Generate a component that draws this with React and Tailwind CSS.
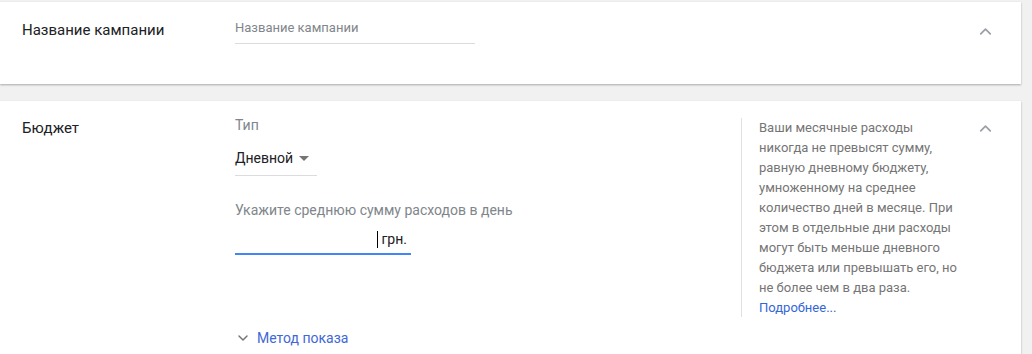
import { ChevronUp, ChevronDown } from "lucide-react";

const helpText =
  "Ваши месячные расходы никогда не превысят сумму, равную дневному бюджету, умноженному на среднее количество дней в месяце. При этом в отдельные дни расходы могут быть меньше дневного бюджета или превышать его, но не более чем в два раза.";

function Collapse() {
  return (
    <button className="ml-auto mr-[24px] mt-[-1px] h-6 w-6 flex items-center justify-center text-[#9aa0a6]">
      <ChevronUp size={19} strokeWidth={2.2} />
    </button>
  );
}

export default function App() {
  return (
    <div
      className="min-h-[354px] bg-[#f1f1f1] pt-[2px] pr-[11px] overflow-hidden"
      style={{ fontFamily: "Roboto, 'Noto Sans', sans-serif" }}
    >
      {/* Campaign name */}
      <section className="flex h-[82px] bg-white pl-[22px] pt-[18px] shadow-[0_1px_2px_rgba(0,0,0,0.3)]">
        <div className="w-[213px] text-[15px] leading-5 text-[#202124]">Название кампании</div>
        <div className="w-[240px]">
          <div className="text-[13px] leading-4 text-[#80868b]">Название кампании</div>
          <div className="mt-[7px] h-px bg-[#dadce0]" />
        </div>
        <Collapse />
      </section>

      {/* Budget */}
      <section className="mt-[17px] flex bg-white pl-[22px] pt-[16px] pb-8 shadow-[0_1px_2px_rgba(0,0,0,0.3)]">
        <div className="w-[213px] pt-[1px] text-[15px] leading-5 text-[#202124]">Бюджет</div>

        <div className="w-[506px]">
          <div className="text-[14px] leading-4 text-[#80868b]">Тип</div>
          <div className="mt-[15px] flex w-[82px] items-center text-[14px] leading-5 text-[#202124]">
            Дневной
            <svg width="10" height="5" viewBox="0 0 10 5" className="ml-[6px] mt-[1px]">
              <path d="M0 0h10L5 5z" fill="#757575" />
            </svg>
          </div>
          <div className="mt-[7px] h-px w-[82px] bg-[#dadce0]" />

          <div className="mt-[26px] text-[14px] leading-4 text-[#80868b]">
            Укажите среднюю сумму расходов в день
          </div>
          <div className="mt-[11px] flex h-[20px] w-[176px] items-center justify-end pr-[4px] text-[14px] text-[#202124]">
            <span className="mr-[3px] h-[17px] w-px bg-black" />
            грн.
          </div>
          <div className="mt-[4px] h-[2px] w-[176px] bg-[#4285f4]" />

          <button className="mt-[73px] flex items-center gap-[6px] text-[14px] leading-5 text-[#4068d6]">
            <ChevronDown size={16} strokeWidth={2.2} className="text-[#757575]" />
            Метод показа
          </button>
        </div>

        <div className="mt-[1px] h-[199px] w-[219px] border-l border-[#e0e0e0] pl-[17px] pr-[2px] text-[13px] leading-5 text-[#757575]">
          <p>{helpText}</p>
          <a className="text-[#3367d6]">Подробнее...</a>
        </div>

        <Collapse />
      </section>
    </div>
  );
}
